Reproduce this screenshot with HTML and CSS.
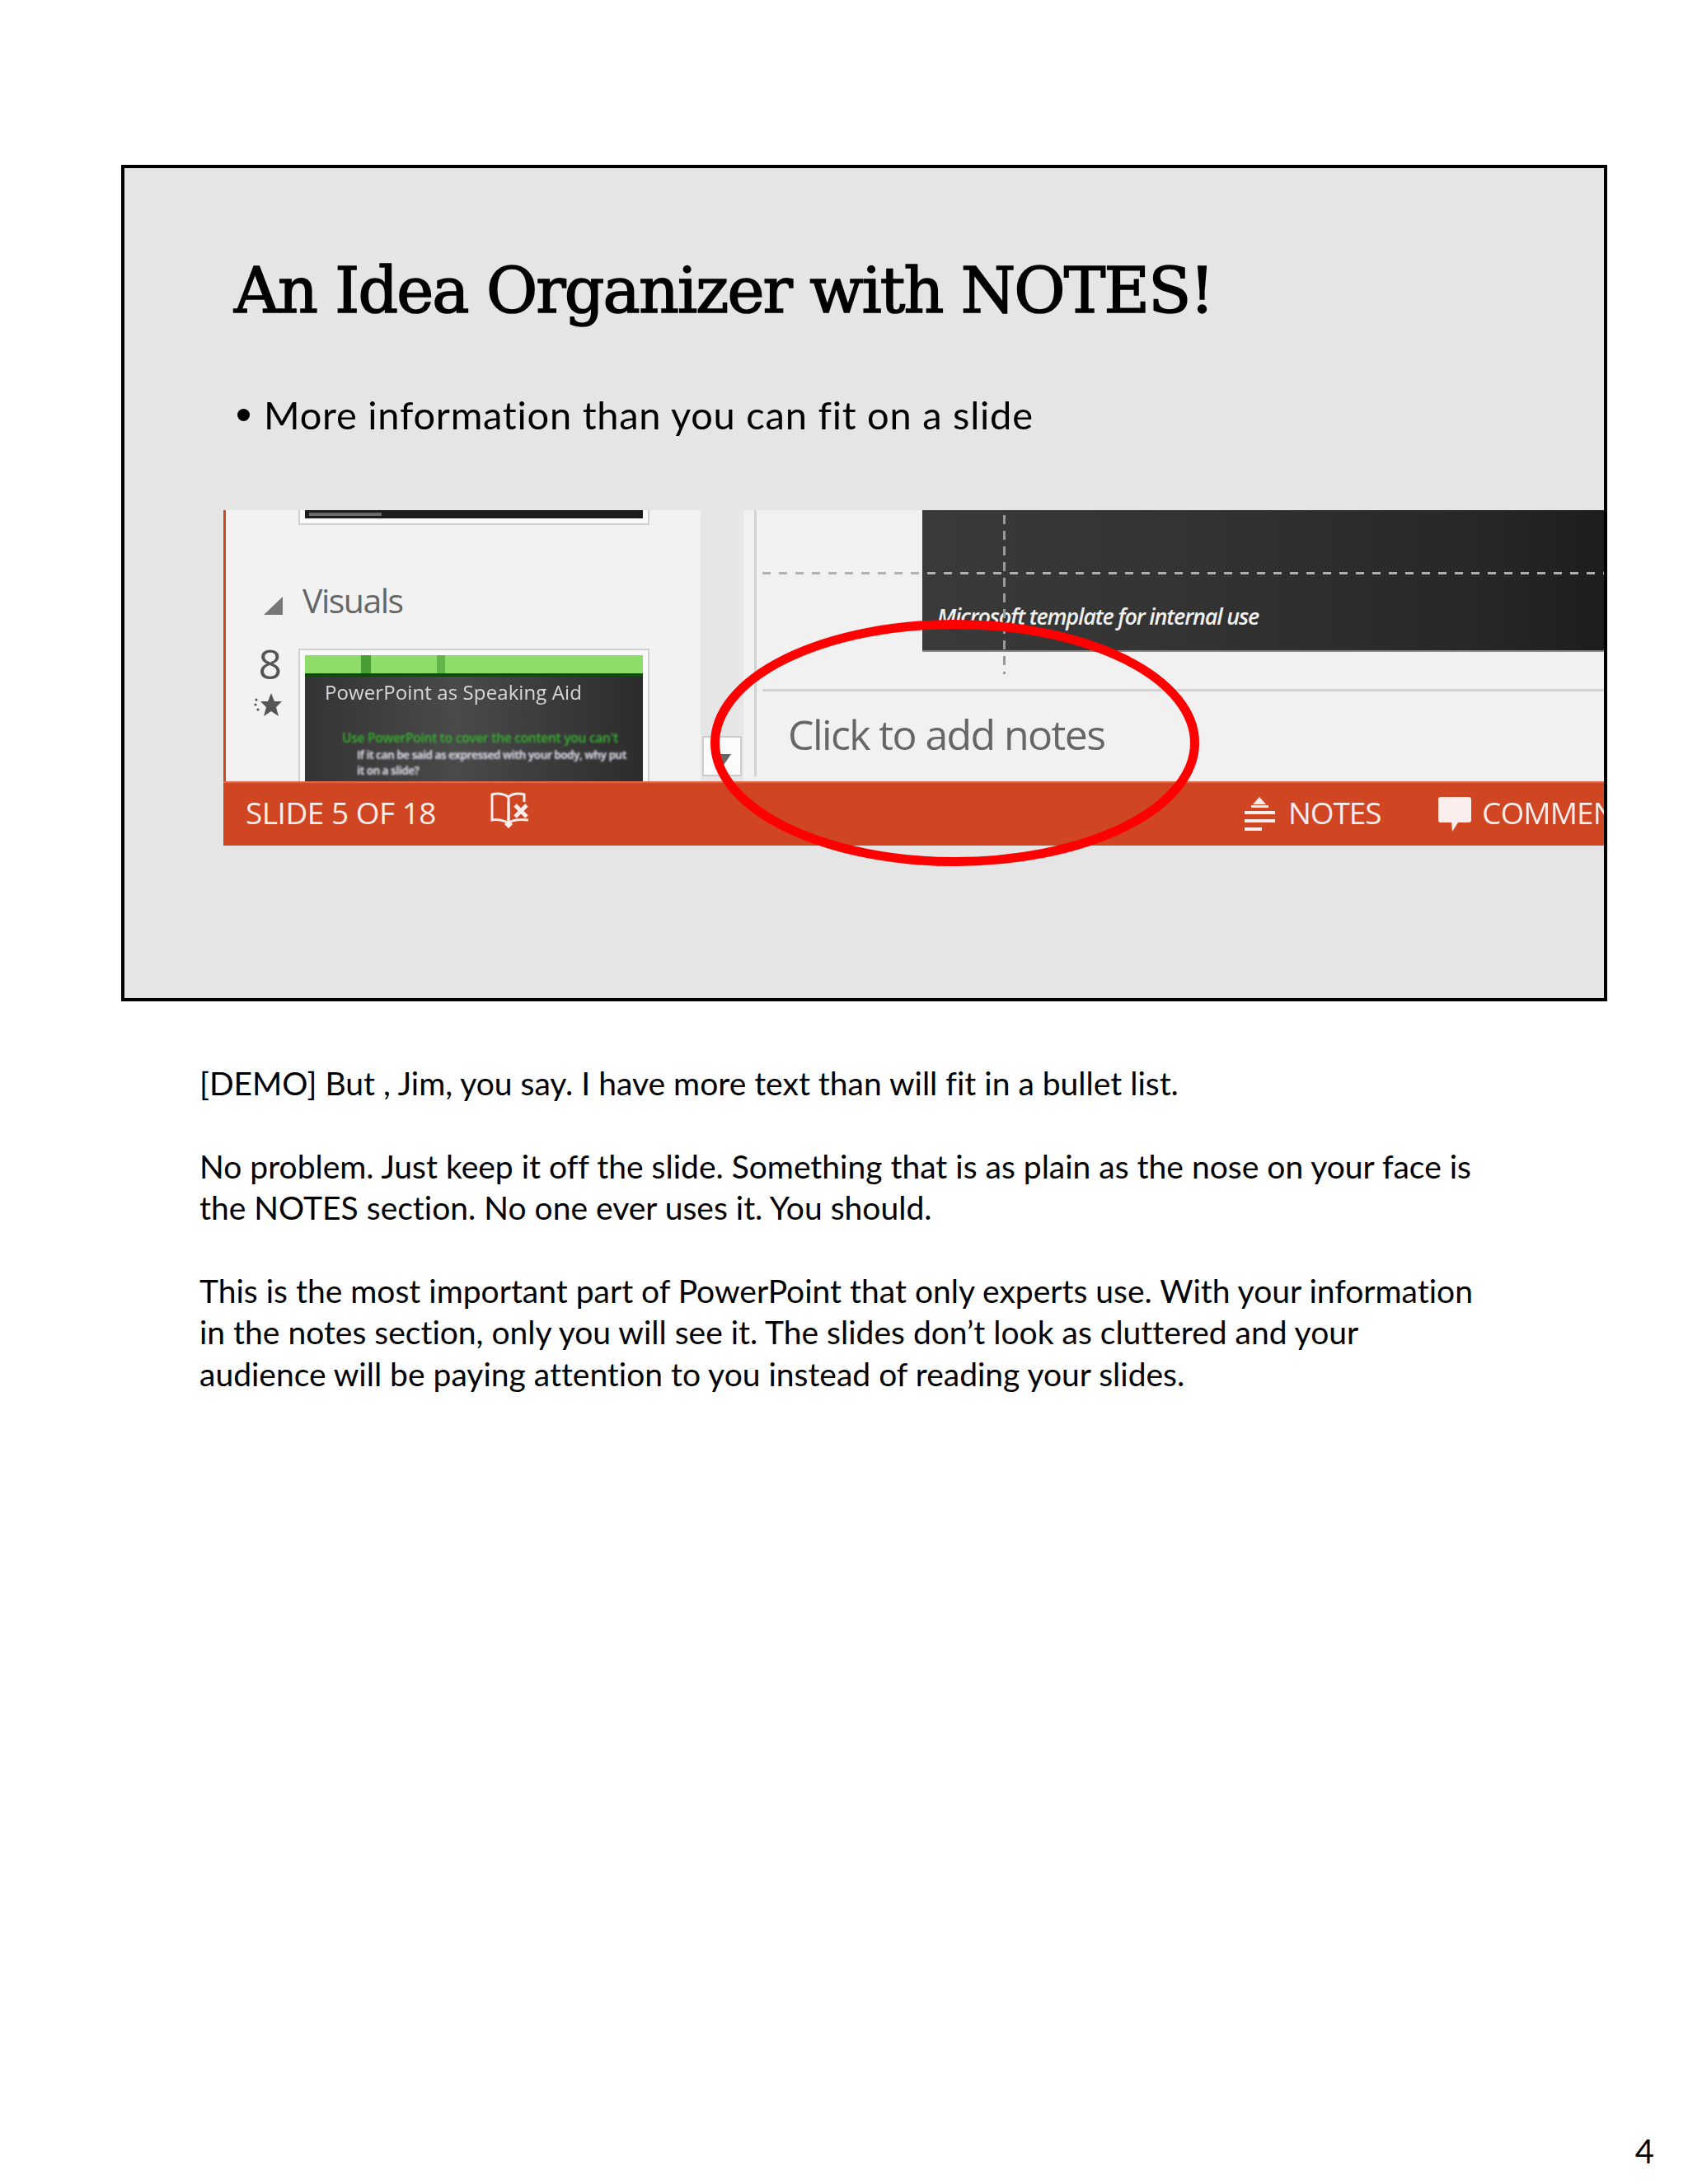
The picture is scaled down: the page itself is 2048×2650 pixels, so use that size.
FILE: index.html
```html
<!DOCTYPE html>
<html lang="en">
<head>
<meta charset="utf-8">
<title>An Idea Organizer with NOTES!</title>
<link rel="stylesheet" href="styles.css">
</head>
<body>
<main class="page">
  <section class="slide">
    <header class="slide-head">
      <h1 class="slide-title">An Idea Organizer with NOTES!</h1>
      <p class="slide-bullet"><span class="bullet-dot"></span><span>More information than you can fit on a slide</span></p>
    </header>
    <div class="shot">
      <div class="shot-body">
        <aside class="sidebar">
          <div class="prev-thumb"><div class="prev-thumb-fill"><i class="prev-thumb-mark"></i></div></div>
          <div class="section-row">
            <svg class="section-tri" viewBox="0 0 23 22"><path d="M23 0V22H0Z"/></svg>
            <span class="section-name">Visuals</span>
          </div>
          <div class="slide-row">
            <div class="slide-meta">
              <span class="slide-num">8</span>
              <svg class="slide-star" viewBox="0 0 34 28"><path d="M21 0l4 10h9l-7 7 3 11-9-6-9 6 3-11-7-7h9z" /><circle cx="3" cy="8" r="1.6"/><circle cx="2" cy="14" r="1.6"/><circle cx="5" cy="20" r="1.6"/></svg>
            </div>
            <div class="thumb">
              <div class="thumb-band"><i class="thumb-stripe s1"></i><i class="thumb-stripe s2"></i></div>
              <div class="thumb-slide">
                <div class="thumb-title">PowerPoint as Speaking Aid</div>
                <div class="thumb-l1">Use PowerPoint to cover the content you can't</div>
                <div class="thumb-l2">If it can be said as expressed with your body, why put<br>it on a slide?</div>
              </div>
            </div>
          </div>
        </aside>
        <div class="scrolltrack">
          <div class="scrollbtn"><svg class="scrollarrow" viewBox="0 0 22 16"><path d="M0 0H22L11 16Z"/></svg></div>
        </div>
        <div class="editor">
          <div class="stage">
            <div class="stage-slide"><span class="stage-text">Microsoft template for internal use</span></div>
            <i class="guide-h"></i>
            <i class="guide-v"></i>
          </div>
          <div class="notes-pane">Click to add notes</div>
        </div>
      </div>
      <footer class="statusbar">
        <span class="status-text status-count">SLIDE 5 OF 18</span>
        <svg class="icon-book" viewBox="0 0 48 44" fill="none"><path d="M22 6C17 2 8 1 2 3V34C8 33 17 34 22 38V6Z"/><path d="M22 6C26 2 34 1 41 3V12M22 38C26 34 36 33 46 34M22 12V42M18 38l4 4 4-4"/><path class="book-x" d="M30 16L44 30M44 16L30 30"/></svg>
        <svg class="icon-notes" viewBox="0 0 37 42"><path d="M18 0L26 9H10Z"/><rect x="8" y="10" width="21" height="3"/><rect y="17" width="37" height="4"/><rect y="27" width="37" height="4"/><rect y="37" width="21" height="4"/></svg>
        <span class="status-text status-notes">NOTES</span>
        <svg class="icon-comment" viewBox="0 0 40 42"><path d="M3 0H37Q40 0 40 3V28Q40 31 37 31H24L17 42L16 31H3Q0 31 0 28V3Q0 0 3 0Z"/></svg>
        <span class="status-text status-comments">COMMENTS</span>
      </footer>
    </div>
    <svg class="callout" viewBox="0 0 593 299"><ellipse cx="296.5" cy="149.5" rx="291" ry="144"/></svg>
  </section>
  <section class="notes">
    <p>[DEMO] But , Jim, you say. I have more text than will fit in a bullet list.</p>
    <p>No problem. Just keep it off the slide. Something that is as plain as the nose on your face is<br>the NOTES section. No one ever uses it. You should.</p>
    <p>This is the most important part of PowerPoint that only experts use. With your information<br>in the notes section, only you will see it. The slides don’t look as cluttered and your<br>audience will be paying attention to you instead of reading your slides.</p>
  </section>
  <div class="page-number">4</div>
</main>
</body>
</html>
```
FILE: styles.css
```css
* { box-sizing: border-box; }
html, body { margin: 0; padding: 0; background: #fff; }
.page {
  width: 2048px;
  height: 2650px;
  padding: 200px 0 0 147px;
  display: flex;
  flex-direction: column;
  overflow: hidden;
  font-family: "Lato", "Open Sans", sans-serif;
  font-variant-ligatures: none;
  color: #000;
}
.slide {
  position: relative;
  flex: none;
  width: 1803px;
  height: 1015px;
  border: 4px solid #000;
  background: #e5e5e5;
}
.slide-head { height: 415px; padding: 99px 0 0 133px; }
.slide-title {
  margin: 0;
  height: 100px;
  line-height: 100px;
  font-family: "DejaVu Serif", serif;
  font-weight: 400;
  font-size: 76px;
  letter-spacing: -1.9px;
  -webkit-text-stroke: 1.6px #000;
  white-space: nowrap;
  filter: blur(.5px);
}
.slide-bullet {
  margin: 70px 0 0;
  display: flex;
  align-items: center;
  gap: 17px;
  height: 60px;
  font-size: 47px;
  line-height: 60px;
  letter-spacing: .75px;
  white-space: nowrap;
  filter: blur(.4px);
}
.bullet-dot { width: 15px; height: 15px; margin-left: 4px; border-radius: 50%; background: #000; }

.shot {
  margin-left: 120px;
  width: 1675px;
  height: 407px;
  overflow: hidden;
  display: flex;
  flex-direction: column;
  background: #f1f1f1;
  font-family: "Open Sans", sans-serif;
}
.shot-body { flex: 1; display: flex; min-height: 0; filter: blur(.6px); }
.sidebar {
  width: 579px;
  flex: none;
  border-left: 3px solid #d04522;
  overflow: hidden;
  background: #f2f2f2;
}
.prev-thumb {
  margin-left: 88px;
  width: 426px;
  height: 18px;
  padding: 0 6px 6px;
  background: #fafafa;
  border: 2px solid #d0d0d0;
  border-top: 0;
}
.prev-thumb-fill { height: 100%; padding: 3px 0 0 5px; background: #1c1c1c; }
.prev-thumb-mark { display: block; width: 88px; height: 4px; background: #6a6a6a; }
.section-row { display: flex; align-items: flex-end; margin: 63px 0 0 46px; height: 56px; gap: 24px; }
.section-tri { width: 23px; height: 22px; fill: #777; margin-bottom: 10px; }
.section-name { font-size: 41px; line-height: 56px; color: #666; letter-spacing: -1.5px; }
.slide-row { display: flex; margin-top: 31px; }
.slide-meta { width: 88px; flex: none; display: flex; flex-direction: column; align-items: flex-end; padding-right: 20px; }
.slide-num { font-size: 50px; line-height: 50px; height: 52px; color: #555; margin-top: -7px; }
.slide-star { width: 34px; height: 28px; fill: #555; margin-top: 9px; }
.thumb {
  width: 426px;
  height: 165px;
  flex: none;
  padding: 6px 6px 0;
  background: #fafafa;
  border: 2px solid #d0d0d0;
  border-bottom: 0;
}
.thumb-band { position: relative; height: 26px; background: #8edc6a; border-bottom: 4px solid #0f4a0f; }
.thumb-stripe { position: absolute; top: 0; bottom: 0; width: 12px; background: #4a9e36; }
.thumb-stripe.s1 { left: 68px; }
.thumb-stripe.s2 { left: 160px; width: 10px; background: #62b34a; }
.thumb-slide { height: 140px; padding: 4px 0 0 24px; overflow: hidden; white-space: nowrap; background: linear-gradient(90deg, #343434, #4a4a4a 45%, #2c2c2c); }
.thumb-title { font-size: 24px; line-height: 30px; color: #d9d6dc; letter-spacing: .1px; filter: blur(.6px); }
.thumb-l1 { margin: 30px 0 0 21px; font-size: 15.5px; line-height: 20px; font-weight: 600; color: #35b52e; letter-spacing: -.25px; filter: blur(.9px); }
.thumb-l2 { margin: 2px 0 0 39px; font-size: 13.5px; line-height: 19px; font-weight: 700; color: #d8d8e8; letter-spacing: -.6px; filter: blur(.8px); }

.scrolltrack { width: 65px; flex: none; padding: 274px 15px 0 2px; background: linear-gradient(90deg, #e6e6e6 0 52px, #f1f1f1 52px); }
.scrollbtn { width: 48px; height: 49px; background: #fbfbfb; border: 2px solid #ccc; display: flex; justify-content: center; padding-top: 20px; }
.scrollarrow { width: 22px; height: 16px; fill: #666; }

.editor { flex: 1; min-width: 0; border-left: 3px solid #d2d2d2; margin-bottom: 6px; display: flex; flex-direction: column; }
.stage { position: relative; height: 220px; flex: none; border-bottom: 3px solid #d2d2d2; margin-left: 7px; }
.stage-slide {
  margin-left: 194px;
  height: 172px;
  padding: 114px 0 0 18px;
  background: linear-gradient(90deg, #3a3a3a, #333 40%, #262626 85%, #1d1d1d);
  border-bottom: 2px solid #888;
}
.stage-text { font-size: 27px; line-height: 30px; font-style: italic; font-weight: 600; color: #f0f0f0; letter-spacing: -1.2px; white-space: nowrap; }
.guide-h { position: absolute; left: 0; right: 0; top: 75px; height: 3px; background: repeating-linear-gradient(90deg, #b0b0b0 0 10px, transparent 10px 20px); }
.guide-v { position: absolute; left: 292px; top: 6px; width: 3px; height: 193px; background: repeating-linear-gradient(180deg, #9a9a9a 0 11px, transparent 11px 19px); }
.notes-pane { padding: 18px 0 0 38px; font-size: 50px; line-height: 68px; color: #666; letter-spacing: -1.6px; white-space: nowrap; }

.statusbar { flex: none; height: 78px; display: flex; align-items: center; padding-left: 27px; background: #d04522; border-top: 2px solid #dd6a4c; filter: blur(.5px); color: #fdecea; }
.status-text { font-size: 37px; line-height: 50px; margin-top: -5px; white-space: nowrap; letter-spacing: -.9px; }
.status-count { width: 297px; flex: none; letter-spacing: -.5px; }
.icon-book { width: 48px; height: 44px; flex: none; fill: none; stroke: #fdecea; stroke-width: 3px; margin-top: -10px; }
.book-x { stroke-width: 5px; }
.icon-notes { width: 37px; height: 42px; flex: none; fill: #fdecea; margin-left: 867px; }
.status-notes { margin-left: 16px; width: 112px; flex: none; letter-spacing: -1.1px; }
.icon-comment { width: 40px; height: 42px; flex: none; fill: #fdeeee; margin-left: 70px; }
.status-comments { margin-left: 13px; flex: none; }

.callout { position: absolute; left: 711px; top: 548px; width: 593px; height: 299px; fill: none; stroke: #f00; stroke-width: 11px; overflow: visible; }

.notes { padding: 74px 0 0 95px; font-size: 39px; line-height: 50.4px; white-space: nowrap; }
.notes p { margin: 0 0 50.4px; }
.page-number { margin-top: auto; align-self: flex-end; padding: 0 41px 15px 0; font-size: 40px; line-height: 50px; }
```
